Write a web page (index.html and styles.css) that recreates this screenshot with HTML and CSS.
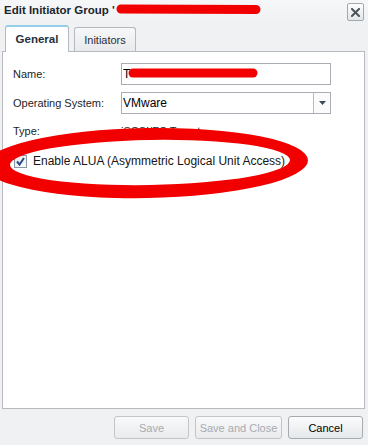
FILE: index.html
```html
<!DOCTYPE html>
<html>
<head>
<meta charset="utf-8">
<link rel="stylesheet" href="styles.css">
</head>
<body>
<div class="dialog">
  <div class="titlebar">
    <span class="title">Edit Initiator Group '</span>
    <button class="close" type="button"><svg width="9" height="9" viewBox="0 0 9 9"><path d="M1 1 L8 8 M8 1 L1 8" stroke="#4d535b" stroke-width="2" stroke-linecap="square"/></svg></button>
  </div>
  <div class="tabs">
    <div class="tab active">General</div>
    <div class="tab">Initiators</div>
  </div>
  <div class="panel">
    <div class="form">
      <span class="label">Name:</span>
      <div class="input">T</div>
      <span class="label">Operating System:</span>
      <div class="select">
        <span class="select-text">VMware</span>
        <span class="select-btn"><svg width="7" height="4" viewBox="0 0 7 4"><path d="M0 0 H7 L3.5 4 Z" fill="#3d4a5c"/></svg></span>
      </div>
      <span class="label">Type:</span>
      <span class="value">iSCSI/FC Target</span>
    </div>
    <div class="check">
      <span class="box"><svg width="11" height="11" viewBox="0 0 11 11"><path d="M2 5.5 L4.5 8.5 L9 2" fill="none" stroke="#2c4b82" stroke-width="2"/></svg></span>
      <span>Enable ALUA (Asymmetric Logical Unit Access)</span>
    </div>
  </div>
  <div class="footer">
    <button class="btn w-save" type="button" disabled>Save</button>
    <button class="btn w-saveclose" type="button" disabled>Save and Close</button>
    <button class="btn w-cancel" type="button">Cancel</button>
  </div>
  <svg class="marks" width="368" height="445" viewBox="0 0 368 445">
    <path d="M121 9 L256 9.5" stroke="#f20000" stroke-width="9" stroke-linecap="round" fill="none"/>
    <path d="M133 73 L253 73" stroke="#f20000" stroke-width="9" stroke-linecap="round" fill="none"/>
    <path fill="#f20000" fill-rule="evenodd" transform="rotate(-1 150 163)" d="M-15.4 163 a161.7 35 0 1 0 323.4 0 a161.7 35 0 1 0 -323.4 0 Z M10 162.5 a140 22.5 0 1 0 280 0 a140 22.5 0 1 0 -280 0 Z"/>
  </svg>
</div>
</body>
</html>
```
FILE: styles.css
```css
html, body {
  margin: 0;
  padding: 0;
}
body {
  width: 368px;
  height: 445px;
  overflow: hidden;
  font-family: "Liberation Sans", Arial, sans-serif;
  color: #1a1a1a;
}
.dialog {
  position: relative;
  width: 368px;
  height: 445px;
  background: #eff1f3;
  display: flex;
  flex-direction: column;
}
.titlebar {
  height: 22px;
  display: flex;
  align-items: center;
  justify-content: space-between;
  padding: 0 4px 0 4px;
  background: linear-gradient(#f6f7f8, #eff1f3);
}
.title {
  font-weight: bold;
  font-size: 11.5px;
  color: #1c2430;
  margin-top: -2px;
}
.close {
  width: 17px;
  height: 18px;
  margin-top: 2px;
  padding: 0;
  border: 1px solid #a3a9b0;
  border-radius: 2px;
  background: linear-gradient(#fdfdfd, #e3e6ea);
  display: flex;
  align-items: center;
  justify-content: center;
}
.tabs {
  height: 29px;
  display: flex;
  align-items: flex-end;
  gap: 5px;
  padding-left: 5px;
}
.tab {
  box-sizing: border-box;
  height: 24px;
  width: 62px;
  border: 1px solid #b4b9bf;
  border-bottom: none;
  border-radius: 3px 3px 0 0;
  background: linear-gradient(#f7f8f9, #e7e9ec);
  font-size: 11px;
  color: #2a2f36;
  display: flex;
  align-items: center;
  justify-content: center;
}
.tab.active {
  position: relative;
  z-index: 1;
  width: 64px;
  height: 27px;
  margin-bottom: -1px;
  padding-bottom: 1px;
  background: #ffffff;
  border-top: 2px solid #93cde6;
  font-weight: bold;
  font-size: 11.5px;
  color: #24303c;
}
.panel {
  box-sizing: border-box;
  height: 358px;
  margin: 0 3px 0 2px;
  background: #ffffff;
  border: 1px solid #b7bbc0;
  padding: 11px 10px 0 10px;
}
.form {
  display: grid;
  grid-template-columns: 108px 210px;
  grid-template-rows: 22px 22px 20px;
  row-gap: 7px;
  align-items: center;
}
.label {
  font-size: 11px;
  color: #1e1e1e;
}
.input, .select {
  box-sizing: border-box;
  height: 22px;
  border: 1px solid #a9aeb4;
  background: #ffffff;
  font-size: 12px;
  color: #000;
  display: flex;
  align-items: center;
  padding-left: 1px;
}
.select {
  padding-left: 1px;
  padding-right: 0;
}
.select-text {
  flex: 1;
}
.select-btn {
  width: 16px;
  height: 20px;
  border-left: 1px solid #b5bac0;
  display: flex;
  align-items: center;
  justify-content: center;
  background: #fbfbfc;
}
.value {
  font-size: 11px;
  color: #1e1e1e;
}
.check {
  margin-top: 10px;
  height: 20px;
  display: flex;
  align-items: center;
  gap: 6px;
  font-size: 12px;
  color: #151515;
  padding-left: 1px;
}
.box {
  box-sizing: border-box;
  width: 13px;
  height: 13px;
  border: 1px solid #8797a8;
  background: linear-gradient(135deg, #dfe5ec, #fdfdfe);
  display: flex;
  align-items: center;
  justify-content: center;
}
.footer {
  height: 36px;
  box-sizing: border-box;
  padding: 7px 5px 0 0;
  display: flex;
  justify-content: flex-end;
  align-items: flex-start;
  gap: 6px;
}
.btn {
  box-sizing: border-box;
  height: 23px;
  border: 1px solid #a6abb2;
  border-radius: 3px;
  background: linear-gradient(#fcfcfd, #e4e7ea);
  font-family: "Liberation Sans", Arial, sans-serif;
  font-size: 11px;
  color: #000;
  padding: 0;
}
.btn:disabled {
  color: #a7abb0;
  border-color: #c2c6cb;
  background: linear-gradient(#f8f9fa, #e9ebed);
}
.w-save { width: 75px; }
.w-saveclose { width: 87px; }
.w-cancel { width: 75px; }
.marks {
  position: absolute;
  left: 0;
  top: 0;
  pointer-events: none;
}
```
